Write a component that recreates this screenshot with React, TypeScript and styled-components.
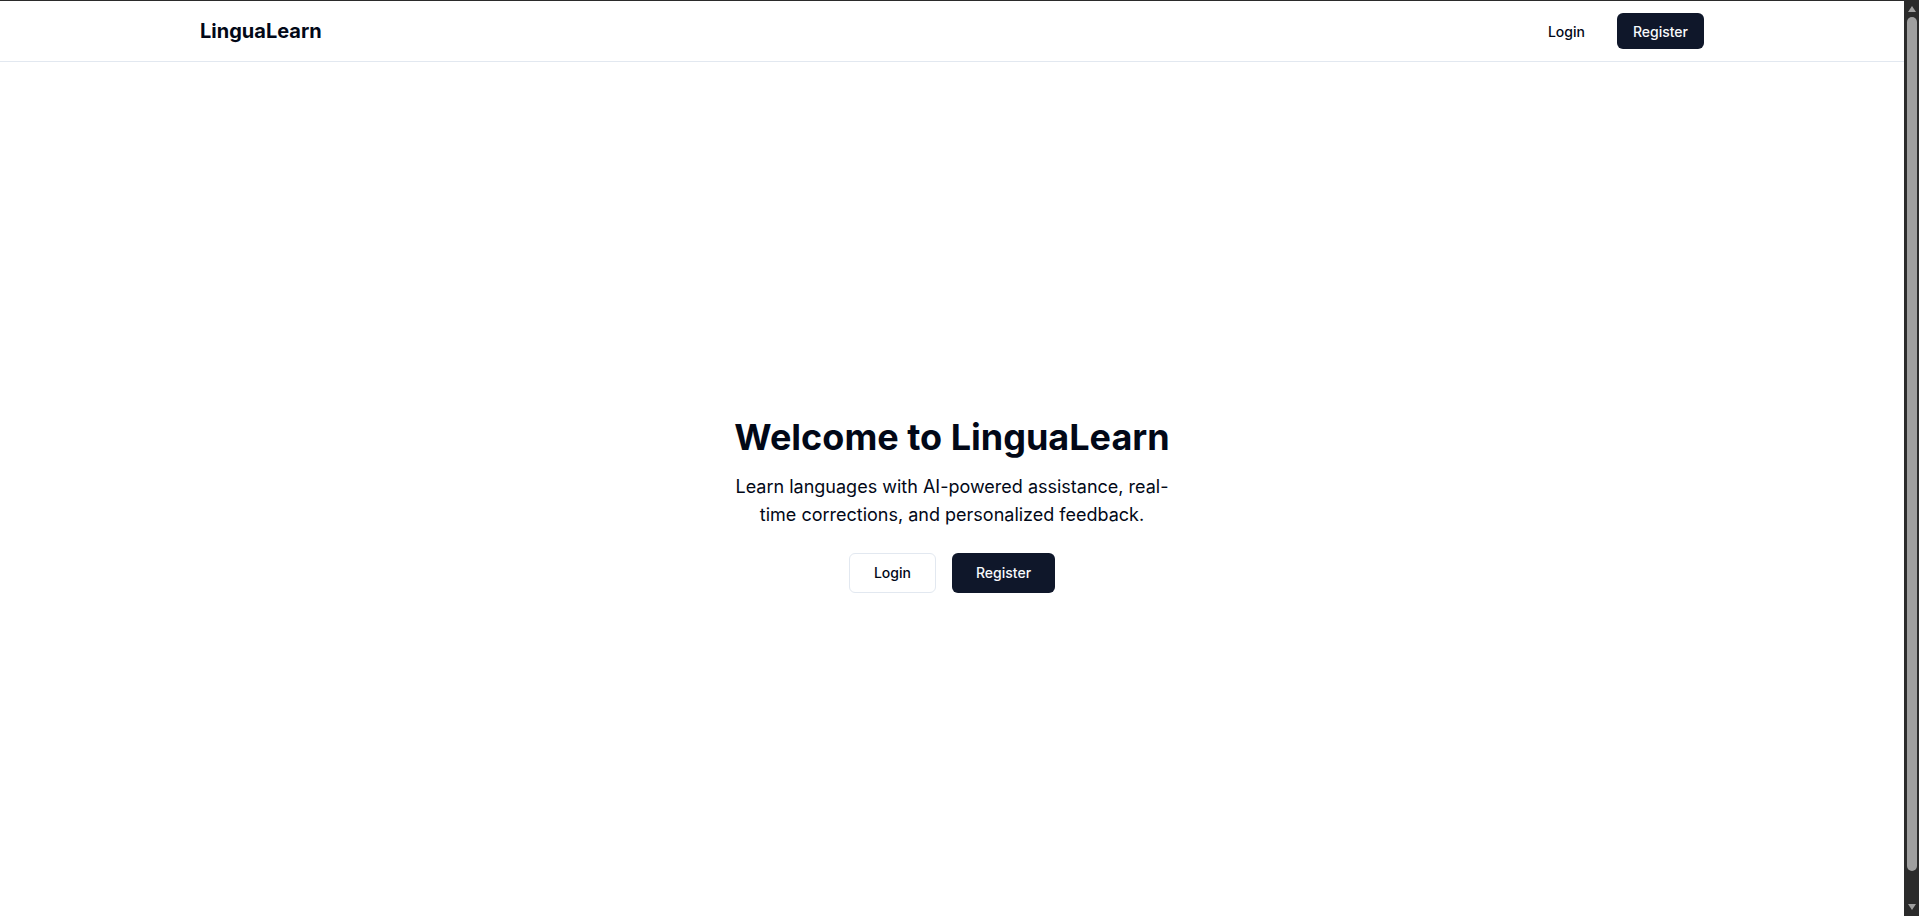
import { FC, ReactNode } from 'react';
import styled, { createGlobalStyle, css } from 'styled-components';

const GlobalStyle = createGlobalStyle`
  * {
    box-sizing: border-box;
  }
  body {
    margin: 0 15px 0 0;
    border-top: 1px solid #2b2b2b;
    background: #ffffff;
    color: #020817;
    font-family: Inter, 'Noto Sans', sans-serif;
    -webkit-font-smoothing: antialiased;
  }
`;

// mimic of the browser's dark scrollbar seen in the screenshot
const ScrollTrack = styled.div`
  position: fixed;
  top: 0;
  right: 0;
  width: 15px;
  height: 100vh;
  background: #2b2b2b;
  display: flex;
  flex-direction: column;
  align-items: center;
  padding: 6px 0;
  gap: 5px;
`;

const ScrollThumb = styled.div`
  flex: 1;
  width: 10px;
  margin-bottom: 28px;
  border-radius: 5px;
  background: #9f9f9f;
`;

const Arrow: FC<{ down?: boolean }> = ({ down }) => (
  <svg width="10" height="6" viewBox="0 0 10 6">
    <polygon points={down ? '1,0 9,0 5,6' : '5,0 9,6 1,6'} fill="#9f9f9f" />
  </svg>
);

const Header = styled.header`
  height: 61px;
  border-bottom: 1px solid #e2e8f0;
  background: #ffffff;
`;

const HeaderInner = styled.div`
  max-width: 1536px;
  height: 100%;
  margin: 0 auto;
  padding: 0 16px;
  display: flex;
  align-items: center;
  justify-content: space-between;
`;

const Logo = styled.a`
  font-size: 20px;
  font-weight: 700;
  color: #020817;
  text-decoration: none;
`;

const Nav = styled.nav`
  display: flex;
  align-items: center;
  gap: 16px;
`;

type Variant = 'primary' | 'ghost' | 'outline';
type Size = 'sm' | 'lg';

const Button = styled.button<{ $variant: Variant; $size: Size }>`
  display: inline-flex;
  align-items: center;
  justify-content: center;
  border-radius: 6px;
  font-family: inherit;
  font-size: 14px;
  font-weight: 500;
  cursor: pointer;
  border: none;
  height: ${(p) => (p.$size === 'sm' ? '36px' : '40px')};
  padding: ${(p) => (p.$size === 'sm' ? '0 16px' : '0 24px')};
  ${(p) =>
    p.$variant === 'primary' &&
    css`
      background: #0f172a;
      color: #f8fafc;
    `}
  ${(p) =>
    p.$variant === 'ghost' &&
    css`
      background: transparent;
      color: #020817;
    `}
  ${(p) =>
    p.$variant === 'outline' &&
    css`
      background: #ffffff;
      border: 1px solid #e2e8f0;
      color: #020817;
    `}
`;

const Main = styled.main`
  min-height: calc(100vh - 31px);
  display: flex;
  align-items: center;
  justify-content: center;
`;

const Hero = styled.section`
  display: flex;
  flex-direction: column;
  align-items: center;
  text-align: center;
`;

const Title = styled.h1`
  margin: 0 0 16px;
  font-size: 36px;
  line-height: 40px;
  font-weight: 700;
`;

const Subtitle = styled.p`
  margin: 0;
  max-width: 448px;
  font-size: 18px;
  line-height: 28px;
  color: #020817;
`;

const Actions = styled.div`
  margin-top: 24px;
  display: flex;
  gap: 16px;
`;

const Page: FC<{ children: ReactNode }> = ({ children }) => (
  <>
    <GlobalStyle />
    {children}
    <ScrollTrack aria-hidden>
      <Arrow />
      <ScrollThumb />
      <Arrow down />
    </ScrollTrack>
  </>
);

export default function App() {
  return (
    <Page>
      <Header>
        <HeaderInner>
          <Logo href="#">LinguaLearn</Logo>
          <Nav>
            <Button $variant="ghost" $size="sm">
              Login
            </Button>
            <Button $variant="primary" $size="sm">
              Register
            </Button>
          </Nav>
        </HeaderInner>
      </Header>
      <Main>
        <Hero>
          <Title>Welcome to LinguaLearn</Title>
          <Subtitle>
            Learn languages with AI-powered assistance, real-time corrections,
            and personalized feedback.
          </Subtitle>
          <Actions>
            <Button $variant="outline" $size="lg">
              Login
            </Button>
            <Button $variant="primary" $size="lg">
              Register
            </Button>
          </Actions>
        </Hero>
      </Main>
    </Page>
  );
}
